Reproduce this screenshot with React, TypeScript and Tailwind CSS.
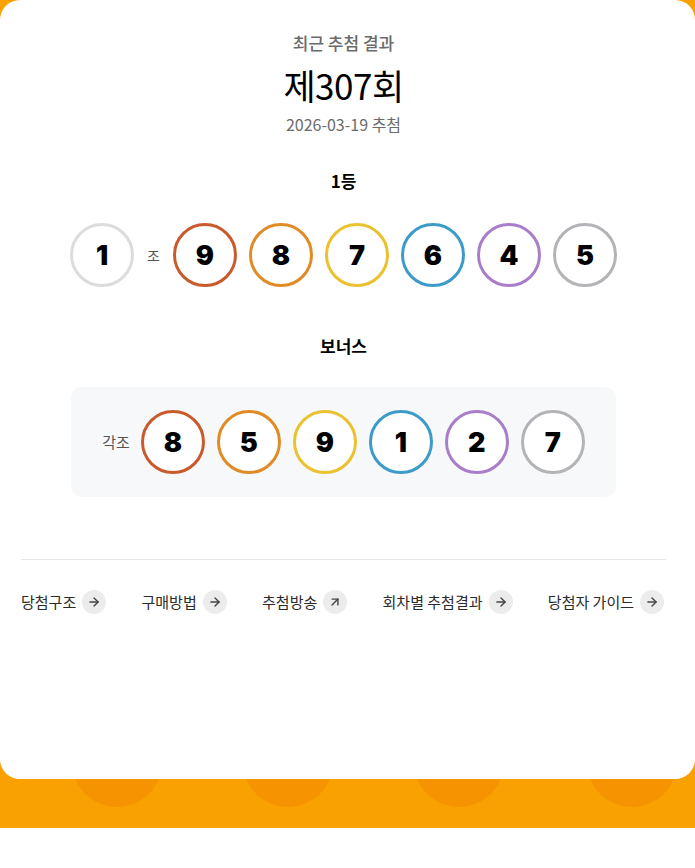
import { ArrowRight, ArrowUpRight } from "lucide-react"

const mainBalls = [
  { n: 9, color: "border-[#c95a2b]" },
  { n: 8, color: "border-[#e08b25]" },
  { n: 7, color: "border-[#eac22f]" },
  { n: 6, color: "border-[#3c9bc8]" },
  { n: 4, color: "border-[#a87ecb]" },
  { n: 5, color: "border-[#b3b3b8]" },
]

const bonusBalls = [
  { n: 8, color: "border-[#c95a2b]" },
  { n: 5, color: "border-[#e08b25]" },
  { n: 9, color: "border-[#eac22f]" },
  { n: 1, color: "border-[#3c9bc8]" },
  { n: 2, color: "border-[#a87ecb]" },
  { n: 7, color: "border-[#b3b3b8]" },
]

const links = [
  { label: "당첨구조", external: false },
  { label: "구매방법", external: false },
  { label: "추첨방송", external: true },
  { label: "회차별 추첨결과", external: false },
  { label: "당첨자 가이드", external: false },
]

function Ball({ n, color }: { n: number; color: string }) {
  return (
    <div
      className={`w-16 h-16 rounded-full border-[3px] ${color} bg-white flex items-center justify-center flex-shrink-0`}
    >
      <span className="text-[27px] font-black text-black leading-none font-['Inter',sans-serif]">{n}</span>
    </div>
  )
}

export default function App() {
  return (
    <div className="w-[695px] h-[868px] bg-white font-['Noto_Sans_CJK_KR','Noto_Sans',sans-serif]">
      {/* 주황 배경 띠 */}
      <div className="relative h-[828px] bg-[#f8a100] overflow-hidden">
        {/* 장식용 원 */}
        <div className="absolute top-[717px] left-[72px] w-[90px] h-[90px] rounded-full bg-[#f69300]" />
        <div className="absolute top-[717px] left-[243px] w-[90px] h-[90px] rounded-full bg-[#f69300]" />
        <div className="absolute top-[717px] left-[414px] w-[90px] h-[90px] rounded-full bg-[#f69300]" />
        <div className="absolute top-[717px] left-[587px] w-[90px] h-[90px] rounded-full bg-[#f69300]" />

        <div className="relative z-10 h-[779px] bg-white rounded-[20px] pl-[21px] pr-[29px] pt-[31px] flex flex-col items-center">
          <p className="text-[17px] leading-6 font-medium text-[#6b6b6b]">최근 추첨 결과</p>
          <h1 className="mt-[9px] text-[35px] leading-[42px] tracking-[-0.5px] text-black">제307회</h1>
          <p className="mt-[6px] text-[16px] leading-6 text-[#6b6b6b]">2026-03-19 추첨</p>

          <p className="mt-[33px] text-[17px] leading-6 font-bold text-black">1등</p>
          <div className="mt-[30px] flex items-center">
            <Ball n={1} color="border-[#dcdcdc]" />
            <span className="mx-[13px] text-[14px] text-[#555]">조</span>
            <div className="flex items-center gap-3">
              {mainBalls.map((b, i) => (
                <Ball key={i} n={b.n} color={b.color} />
              ))}
            </div>
          </div>

          <p className="mt-[47px] text-[17px] leading-6 font-bold text-black">보너스</p>
          <div className="mt-[29px] w-[545px] h-[110px] bg-[#f7f8fa] rounded-[10px] flex items-center justify-center">
            <span className="mr-[11px] text-[15px] text-[#555]">각조</span>
            <div className="flex items-center gap-3">
              {bonusBalls.map((b, i) => (
                <Ball key={i} n={b.n} color={b.color} />
              ))}
            </div>
          </div>

          <div className="mt-[62px] w-full h-px bg-[#e6e6e6]" />

          <div className="mt-[30px] w-full flex items-center justify-between pr-[2px]">
            {links.map((l) => (
              <div key={l.label} className="flex items-center gap-[6px]">
                <span className="text-[15px] leading-6 text-[#2b2b2b]">{l.label}</span>
                <span className="w-6 h-6 rounded-full bg-[#ececec] flex items-center justify-center">
                  {l.external ? (
                    <ArrowUpRight className="w-[14px] h-[14px] text-[#444]" strokeWidth={2.4} />
                  ) : (
                    <ArrowRight className="w-[14px] h-[14px] text-[#444]" strokeWidth={2.4} />
                  )}
                </span>
              </div>
            ))}
          </div>
        </div>
      </div>
    </div>
  )
}
